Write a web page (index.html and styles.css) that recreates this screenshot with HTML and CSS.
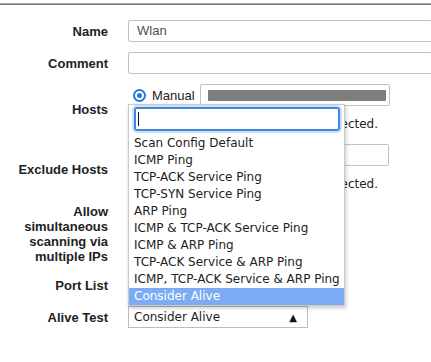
FILE: index.html
```html
<!DOCTYPE html>
<html lang="en">
<head>
  <meta charset="UTF-8">
  <title>New Target</title>
  <link rel="stylesheet" href="styles.css">
</head>
<body>

  <!-- Dialog title edge -->
  <div class="title-edge"></div>

  <!-- Target form -->
  <div class="form">
    <div class="row">
      <div class="label">Name</div>
      <div class="field"><div class="input wide">Wlan</div></div>
    </div>

    <div class="row">
      <div class="label">Comment</div>
      <div class="field"><div class="input wide"></div></div>
    </div>

    <div class="row">
      <div class="label">Hosts</div>
      <div class="field">
        <div class="line">
          <span class="radio"></span>
          <span class="radio-text">Manual</span>
          <div class="input manual"><span class="blur"></span></div>
        </div>
        <div class="note">selected.</div>
      </div>
    </div>

    <div class="row">
      <div class="label">Exclude Hosts</div>
      <div class="field">
        <div class="input exclude"></div>
        <div class="note">selected.</div>
      </div>
    </div>

    <div class="row">
      <div class="label">Allow simultaneous scanning via multiple IPs</div>
      <div class="field"></div>
    </div>

    <div class="row">
      <div class="label">Port List</div>
      <div class="field"><div class="select"></div></div>
    </div>

    <div class="row">
      <div class="label">Alive Test</div>
      <div class="field">
        <div class="select open">
          <span>Consider Alive</span>
          <span class="arrow">▲</span>

          <!-- Open dropdown -->
          <div class="dropdown">
            <div class="search"><span class="caret"></span></div>
            <ul class="options">
              <li>Scan Config Default</li>
              <li>ICMP Ping</li>
              <li>TCP-ACK Service Ping</li>
              <li>TCP-SYN Service Ping</li>
              <li>ARP Ping</li>
              <li>ICMP &amp; TCP-ACK Service Ping</li>
              <li>ICMP &amp; ARP Ping</li>
              <li>TCP-ACK Service &amp; ARP Ping</li>
              <li>ICMP, TCP-ACK Service &amp; ARP Ping</li>
              <li class="active">Consider Alive</li>
            </ul>
          </div>
        </div>
      </div>
    </div>
  </div>

</body>
</html>
```

FILE: styles.css
```css
html, body {
  overflow: hidden;
}

body {
  margin: 0;
  padding: 0;
  background: #fff;
  color: #222;
  font-family: 'Liberation Sans', Arial, sans-serif;
  font-size: 13px;
}

.title-edge {
  margin-top: 3px;
  height: 0;
  border-top: 1px solid #a4a4a4;
  border-bottom: 1px solid #7c7c7c;
}

.form {
  padding-top: 15px;
  display: flex;
  flex-direction: column;
  gap: 10px;
}

.row {
  display: grid;
  grid-template-columns: 108px 1fr;
  column-gap: 20px;
  align-items: center;
}

.label {
  text-align: right;
  font-weight: bold;
  line-height: 15px;
  color: #222;
}

.field {
  min-height: 22px;
}

.input {
  box-sizing: border-box;
  height: 22px;
  border: 1px solid #c2c2c2;
  border-radius: 2px;
  padding: 0 8px;
  line-height: 20px;
  color: #4f4f4f;
  background: #fff;
}

.input.wide {
  width: 304px;
}

.line {
  display: flex;
  align-items: center;
}

.radio {
  box-sizing: border-box;
  width: 13px;
  height: 13px;
  margin-left: 5px;
  border: 2px solid #2a78d6;
  border-radius: 50%;
  display: flex;
  align-items: center;
  justify-content: center;
}

.radio::after {
  content: "";
  width: 5px;
  height: 5px;
  border-radius: 50%;
  background: #2a78d6;
}

.radio-text {
  margin-left: 6px;
  margin-right: 5px;
  color: #222;
}

.input.manual {
  width: 190px;
  padding: 0 3px 0 7px;
  display: flex;
  align-items: center;
}

.blur {
  width: 179px;
  height: 11px;
  background: #7e7e7e;
  border-radius: 1px;
}

.input.exclude {
  width: 261px;
}

.note {
  width: 250px;
  padding: 10px 0 1px;
  text-align: right;
  font-family: 'DejaVu Sans', sans-serif;
  font-size: 12px;
  line-height: 17px;
  color: #222;
}

.select {
  box-sizing: border-box;
  width: 180px;
  height: 22px;
  border: 1px solid #bdbdbd;
  padding: 0 10px 0 5px;
  display: flex;
  align-items: center;
  justify-content: space-between;
  font-family: 'DejaVu Sans', sans-serif;
  font-size: 12px;
  color: #222;
  background: #fff;
}

.select.open {
  position: relative;
}

.arrow {
  font-size: 10px;
  color: #111;
}

.dropdown {
  position: absolute;
  left: -1px;
  bottom: calc(100% + 1px);
  width: 217px;
  box-sizing: border-box;
  border: 1px solid #cacaca;
  background: #fff;
  box-shadow: 1px 2px 4px rgba(0, 0, 0, 0.22);
  z-index: 10;
}

.search {
  box-sizing: border-box;
  width: 206px;
  height: 24px;
  margin: 2px 0 0 5px;
  border: 2px solid #3d87de;
  border-radius: 3px;
  box-shadow: 0 0 0 2px rgba(61, 135, 222, 0.25);
  display: flex;
  align-items: center;
}

.caret {
  width: 1px;
  height: 14px;
  margin-left: 2px;
  background: #111;
}

.options {
  list-style: none;
  margin: 4px 0 0;
  padding: 0;
}

.options li {
  height: 17px;
  line-height: 17px;
  padding-left: 5px;
  white-space: nowrap;
  color: #222;
}

.options li.active {
  background: #7aabf3;
  color: #fff;
}
```
